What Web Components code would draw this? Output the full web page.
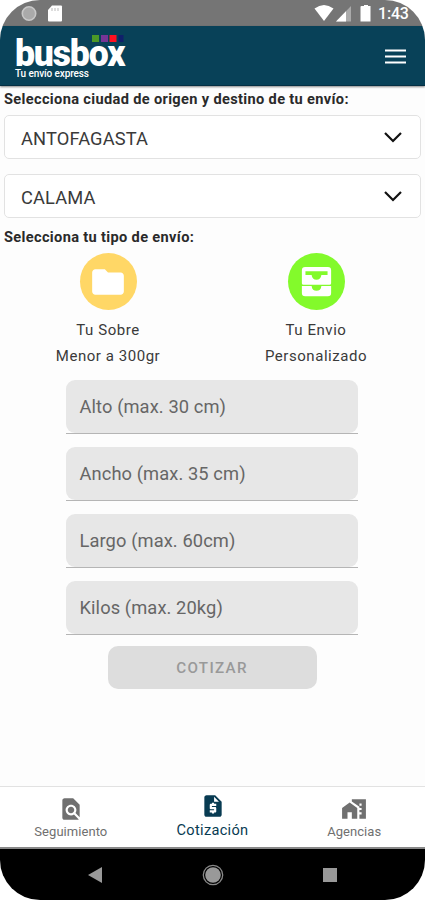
<!DOCTYPE html>
<html lang="es">
<head>
<meta charset="utf-8">
<title>busbox</title>
<style>
html,body{margin:0;height:100%;background:#fff}
body{font-family:Roboto,"Liberation Sans",sans-serif;overflow:hidden}
</style>
</head>
<body>
<bus-app></bus-app>
<script>
const define = (name, css, html) => customElements.define(name, class extends HTMLElement {
  connectedCallback() {
    if (this.shadowRoot) return;
    const root = this.attachShadow({mode: 'open'});
    const markup = typeof html === 'function' ? html(this) : html;
    root.innerHTML = `<style>*{box-sizing:border-box}svg{display:block}:host{box-sizing:border-box}${css}</style>${markup}`;
  }
});

const icons = {
  folder: '<path d="M10 4H4c-1.1 0-2 .9-2 2v12c0 1.1.9 2 2 2h16c1.1 0 2-.9 2-2V8c0-1.1-.9-2-2-2h-8z"/>',
  inbox: '<path fill-rule="evenodd" d="M5 3h14q2 0 2 2v8q0 1-1 1H4q-1 0-1-1V5q0-2 2-2zM5.200 5.700v2.300H9c.2 1.900 1.300 2.900 3 2.900s2.800-1 3-2.900h3.800V5.700z"/><path d="M3 14.700h6c.2 2 1.300 3 3 3s2.800-1 3-3h6V19q0 2-2 2H5q-2 0-2-2z"/>',
  search: '<path d="M20 19.590V8l-6-6H6c-1.100 0-1.990.9-1.990 2L4 20c0 1.100.890 2 1.990 2H18c.450 0 .850-.150 1.190-.4l-4.430-4.430c-.8.520-1.740.830-2.760.830-2.760 0-5-2.240-5-5s2.240-5 5-5 5 2.240 5 5c0 1.020-.310 1.960-.830 2.750L20 19.590zM9 13c0 1.660 1.340 3 3 3s3-1.340 3-3-1.340-3-3-3-3 1.340-3 3z"/>',
  quote: '<path d="M14 2H6c-1.100 0-1.990.9-1.990 2L4 20c0 1.100.890 2 1.990 2H18c1.100 0 2-.9 2-2V8l-6-6zm1 10h-4v1h3c.550 0 1 .450 1 1v3c0 .550-.450 1-1 1h-1v1h-2v-1H9v-2h4v-1h-3c-.550 0-1-.450-1-1v-3c0-.550.450-1 1-1h1V9h2v1h2v2zm-2-4V3.500L17.500 8H13z"/>',
  agency: '<path d="M1 11v10h5v-6h4v6h5V11L8 6z"/><path d="M10 3v1.970l7 5V11h2v2h-2v2h2v2h-2v4h6V3H10zm9 6h-2V7h2v2z"/>'
};
const icon = (name, size) => `<svg width="${size}" height="${size}" viewBox="0 0 24 24" fill="currentColor">${icons[name]}</svg>`;

define('status-bar', `
  :host{display:flex;height:26px;flex:none;background:#757575;color:#fff;align-items:center;padding:0 16px 0 21px}
  .grow{flex:1}
  .time{font-size:16px;font-weight:500;line-height:26px;width:31px;letter-spacing:-.2px;white-space:nowrap;padding-top:2px}
`, `<svg width="42" height="26" viewBox="0 0 42 26"><circle cx="8" cy="13.500" r="6.700" fill="#aaa" stroke="#c8c8c8" stroke-width="1.600"/><path d="M31 5.500h9q1 0 1 1v14q0 1-1 1H28q-1 0-1-1V10z" fill="#fff"/><path d="M31 8v3M34 8v3M37 8v3" stroke="#bbb" stroke-width="1"/></svg>
  <span class="grow"></span>
  <svg width="64" height="26" viewBox="0 0 64 26"><path d="M.500 8.500Q10 1.500 19.500 8.500L10 21z" fill="#fff"/><path d="M37 6v15.500H22z" fill="#aaa"/><path d="M32 11.200v10.300H22z" fill="#fff"/><path d="M47.500 6h2.500V5h4v1h2.500v15.500h-10V7q0-1 1-1z" fill="#fff"/></svg>
  <span class="time">1:43</span>`);

define('brand-logo', `
  :host{display:grid;width:120px;height:60px;position:relative;color:#fff;align-content:start}
  .name{font:900 36.500px/30px Roboto,sans-serif;letter-spacing:-1.200px;margin-top:13px;white-space:nowrap;width:120px;transform:scaleX(.975);transform-origin:0 0}
  .tag{font:500 10px/10px Roboto,sans-serif;letter-spacing:-.1px;margin-top:.5px;white-space:nowrap}
  svg{position:absolute;left:77px;top:9px}
`, `<span class="name">busbox</span><span class="tag">Tu envío express</span>
<svg width="32" height="7"><path fill="#4b9827" d="M0 0h7v7H0z"/><path fill="#763596" d="M9 0h7v7H9z"/><path fill="#ff1020" d="M17.500 0h7v7h-7z"/><path fill="#10206b" d="M26.500 0h5v7h-5z"/></svg>`);

define('app-header', `
  :host{display:flex;height:60px;flex:none;justify-content:space-between;align-items:center;background:#084158;padding:0 19px 0 15px;border-bottom:1px solid #052f43;box-shadow:0 1px 2px #0007;position:relative}
  .menu{margin-top:2px}
`, `<brand-logo></brand-logo><svg class="menu" width="21" height="15" viewBox="0 0 21 15"><path d="M0 1.500h21M0 7.500h21M0 13.500h21" stroke="#fff" stroke-width="2.200"/></svg>`);

define('section-title', `
  :host{display:block;padding-left:4px;font-size:14.600px;line-height:20px;font-weight:700;color:#2a2a2a;white-space:nowrap;letter-spacing:.34px}
`, `<slot></slot>`);

define('city-select', `
  :host{display:flex;height:44px;margin:0 4px;padding:0 18px 0 16px;align-items:center;justify-content:space-between;background:#fff;border:1px solid #e2e2e2;border-radius:5px;font-size:18.300px;color:#3a3a3a;font-weight:400;letter-spacing:.12px}
  span{padding-top:3px}
`, `<span><slot></slot></span><svg width="18" height="11" viewBox="0 0 18 11"><path d="M1 1l8 8 8-8" fill="none" stroke="#111" stroke-width="2.200"/></svg>`);

define('shipping-type', `
  :host{display:flex;flex-direction:column;align-items:center;font-size:15px;line-height:26px;color:#3a3a3a;text-align:center;letter-spacing:.55px;white-space:nowrap}
  .disc{width:57px;height:57px;border-radius:50%;background:var(--disc);color:#fff;display:grid;place-items:center;margin-bottom:7px}
`, el => `<div class="disc">${icon(el.getAttribute('icon'), el.getAttribute('size'))}</div><slot></slot>`);

define('measure-field', `
  :host{display:block;width:292px;height:54px;border-bottom:1.500px solid #b5b5b5;font-size:18.300px;line-height:54px;color:#666}
  div{height:53px;background:#e7e7e7;border-radius:9px;padding-left:13.500px;white-space:nowrap;letter-spacing:.1px}
`, `<div><slot></slot></div>`);

define('quote-button', `
  :host{display:grid;place-items:center;width:209px;height:43px;border-radius:10px;background:#ddd;color:#999;font-size:15.200px;font-weight:500;letter-spacing:1.300px}
`, `<span><slot></slot></span>`);

define('nav-tab', `
  :host{display:flex;flex:1;flex-direction:column;align-items:center;color:#707070;font-size:13px;line-height:18px;letter-spacing:.05px;padding-top:9px}
  :host([active]){color:#083b52;font-size:14.600px;letter-spacing:.3px;padding-top:6px}
  span{margin-top:1px}
  :host([active]) span{margin-top:2px}
`, el => `${icon(el.getAttribute('icon'), 26)}<span><slot></slot></span>`);

define('tab-bar', `
  :host{display:flex;height:63px;flex:none;background:#fff;border-top:1px solid #e2e2e2;border-bottom:2px solid #888}
`, `<slot></slot>`);

define('system-nav', `
  :host{display:flex;height:51px;flex:none;background:#000;align-items:center;justify-content:space-between;padding:0 88px}
`, `<svg width="15" height="16"><path d="M0 8L14 0v16z" fill="#999"/></svg>
  <svg width="22" height="22" viewBox="0 0 22 22"><circle cx="11" cy="11" r="9.700" fill="none" stroke="#888" stroke-width="1.300"/><circle cx="11" cy="11" r="7.800" fill="#999"/></svg>
  <svg width="14" height="14"><path d="M0 0h14v14H0z" fill="#999"/></svg>`);

define('bus-app', `
  :host{display:flex;flex-direction:column;width:425px;height:900px;border-radius:40px;overflow:hidden;background:#fdfdfd}
  main{flex:1;display:flex;flex-direction:column;padding-top:3px}
  city-select{flex:none}
  .first{margin-top:6px}.second{margin-top:15px}
  .types{display:grid;grid-template-columns:208px 208px;padding-left:4px;margin-top:6px}
  .form{display:flex;flex-direction:column;align-items:center;gap:13px;margin:11px 1px 0 0}
`, `<status-bar></status-bar><app-header></app-header>
<main>
  <section-title>Selecciona ciudad de origen y destino de tu envío:</section-title>
  <city-select class="first">ANTOFAGASTA</city-select>
  <city-select class="second">CALAMA</city-select>
  <section-title style="margin-top:9px">Selecciona tu tipo de envío:</section-title>
  <div class="types">
    <shipping-type icon="folder" size="38" style="--disc:#ffd766"><span>Tu Sobre</span><span>Menor a 300gr</span></shipping-type>
    <shipping-type icon="inbox" size="39" style="--disc:#83fa2b"><span>Tu Envio</span><span>Personalizado</span></shipping-type>
  </div>
  <div class="form">
    <measure-field>Alto (max. 30 cm)</measure-field>
    <measure-field>Ancho (max. 35 cm)</measure-field>
    <measure-field>Largo (max. 60cm)</measure-field>
    <measure-field>Kilos (max. 20kg)</measure-field>
    <quote-button style="margin-top:-2px">COTIZAR</quote-button>
  </div>
</main>
<tab-bar>
  <nav-tab icon="search">Seguimiento</nav-tab>
  <nav-tab icon="quote" active>Cotización</nav-tab>
  <nav-tab icon="agency">Agencias</nav-tab>
</tab-bar>
<system-nav></system-nav>`);
</script>
</body>
</html>
